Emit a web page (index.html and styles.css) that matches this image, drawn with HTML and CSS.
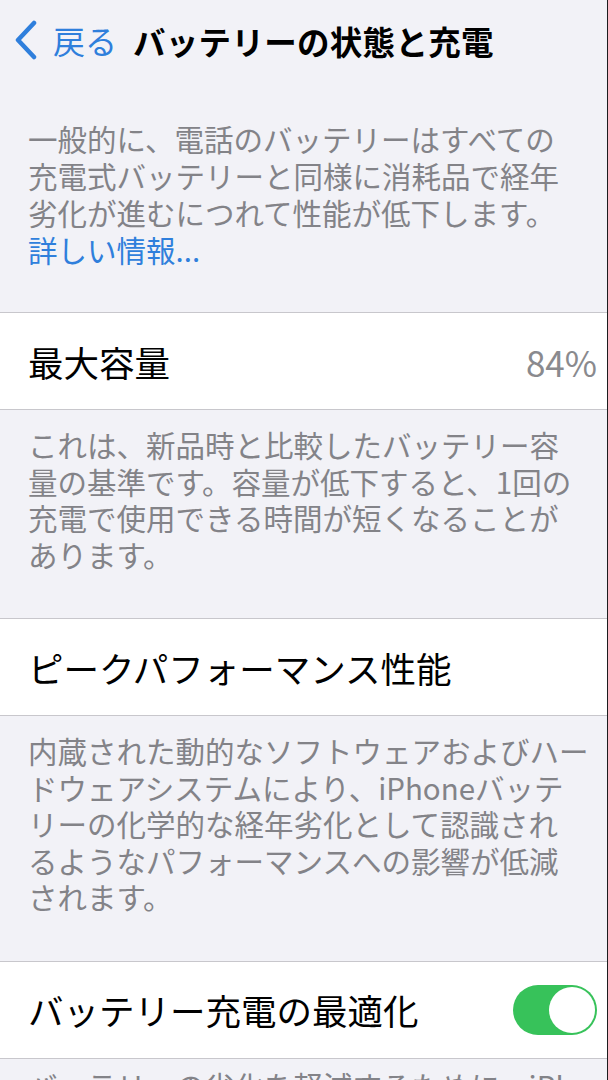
FILE: index.html
```html
<!DOCTYPE html>
<html lang="ja">
<head>
    <meta charset="UTF-8">
    <meta name="viewport" content="width=device-width, initial-scale=1.0">
    <title>バッテリーの状態と充電</title>
    <link rel="stylesheet" href="styles.css">
</head>
<body>
    <div class="screen">
        <!-- Navigation bar -->
        <div class="nav-bar">
            <a class="back-link" href="#">
                <svg class="back-chevron" width="26" height="40" viewBox="0 0 26 40">
                    <path d="M21 3 L5 20 L21 37" fill="none" stroke="#2f7fdc" stroke-width="4.5" stroke-linecap="round" stroke-linejoin="round"/>
                </svg>
                <span>戻る</span>
            </a>
            <div class="nav-title">バッテリーの状態と充電</div>
        </div>

        <div class="group-footer intro">
            一般的に、電話のバッテリーはすべての<br>
            充電式バッテリーと同様に消耗品で経年<br>
            劣化が進むにつれて性能が低下します。<br>
            <a class="info-link" href="#">詳しい情報...</a>
        </div>

        <div class="cell">
            <span class="cell-label">最大容量</span>
            <span class="cell-value">84%</span>
        </div>
        <div class="group-footer">
            これは、新品時と比較したバッテリー容<br>
            量の基準です。容量が低下すると、1回の<br>
            充電で使用できる時間が短くなることが<br>
            あります。
        </div>

        <div class="cell">
            <span class="cell-label">ピークパフォーマンス性能</span>
        </div>
        <div class="group-footer">
            内蔵された動的なソフトウェアおよびハー<br>
            ドウェアシステムにより、iPhoneバッテ<br>
            リーの化学的な経年劣化として認識され<br>
            るようなパフォーマンスへの影響が低減<br>
            されます。
        </div>

        <div class="cell">
            <span class="cell-label">バッテリー充電の最適化</span>
            <div class="toggle on">
                <div class="toggle-knob"></div>
            </div>
        </div>
        <div class="group-footer last">
            バッテリーの劣化を軽減するために、iPhone<br>
            は日常の充電パターンを学習し、
        </div>
    </div>
</body>
</html>
```

FILE: styles.css
```css
html,
body {
    margin: 0;
    padding: 0;
    height: 100%;
    overflow: hidden;
}

body {
    background-color: #f2f2f7;
    font-family: "Noto Sans CJK JP", "Noto Sans", sans-serif;
    color: #000000;
}

.screen {
    width: 607px;
    height: 1080px;
    border-right: 1px solid #1c1c1e;
    background: #f2f2f7;
    overflow: hidden;
}

/* Navigation bar */
.nav-bar {
    height: 80px;
    display: flex;
    align-items: center;
    padding-left: 13px;
}

.back-link {
    display: flex;
    align-items: center;
    gap: 14px;
    color: #2f7fdc;
    text-decoration: none;
    font-size: 32px;
    margin-right: 16px;
}

.back-chevron {
    display: block;
}

.nav-title {
    font-size: 32.5px;
    font-weight: bold;
    letter-spacing: 0.3px;
}

/* Gray explanatory text below a group */
.group-footer {
    padding: 16px 0 46px 28px;
    color: #838388;
    font-size: 29.5px;
    line-height: 36.5px;
    white-space: nowrap;
}

.group-footer.intro {
    padding-top: 40px;
    padding-bottom: 44px;
    line-height: 37px;
}

.group-footer.last {
    padding-top: 8px;
}

.info-link {
    color: #2f7fdc;
    text-decoration: none;
}

/* Table cell */
.cell {
    height: 96px;
    display: flex;
    align-items: center;
    justify-content: space-between;
    padding: 0 10px 0 28px;
    background: #ffffff;
    border-top: 1px solid #c8c7cc;
    border-bottom: 1px solid #c8c7cc;
}

.cell-label {
    font-size: 35.5px;
}

.cell-value {
    font-size: 35px;
    color: #8a8a8e;
}

/* Switch */
.toggle {
    width: 84px;
    height: 50px;
    border-radius: 25px;
    background: #37c25a;
    display: flex;
    align-items: center;
    justify-content: flex-end;
    padding: 0 2px;
    box-sizing: border-box;
}

.toggle-knob {
    width: 46px;
    height: 46px;
    border-radius: 50%;
    background: #ffffff;
}
```
